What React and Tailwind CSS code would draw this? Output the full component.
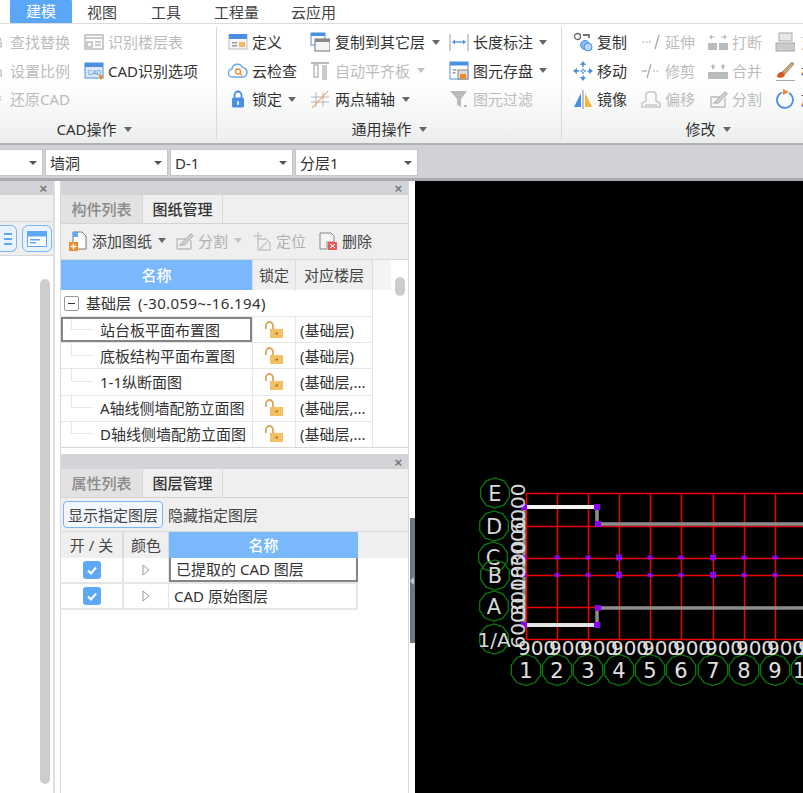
const FONT = "font-['Noto_Sans','Noto_Sans_CJK_SC','Liberation_Sans',sans-serif]";

const G = '#b9bbbd';
const B = '#4a90e2';
const O = '#ee8a2c';

const ICONS = {
  find: <g fill="none" stroke={G} strokeWidth="2"><circle cx="8" cy="6" r="3" /><path d="M4 11h8v7H4z" /></g>,
  scale: <g fill="none" stroke={G} strokeWidth="2"><path d="M8 2v7M4 9h8v9H4z" /></g>,
  restore: <g fill="none" stroke={G} strokeWidth="2"><path d="M8 3v15M4 7h8M4 12h8" /></g>,
  floors: <g fill="none" stroke={G} strokeWidth="1.5"><rect x="1" y="3" width="18" height="14" /><path d="M1 6h18M3 10h5v5H3zM11 10h6M11 13h6" /></g>,
  cadOpt: <g><rect x="1" y="2" width="18" height="15" fill="#dbe9fa" stroke={B} /><rect x="1" y="2" width="18" height="4" fill={B} /><text x="3.5" y="14" fontSize="6.5" fontFamily="Liberation Sans" fill={B}>CAD</text><path d="M15 13l5 3-4 3z" fill={O} /></g>,
  define: <g><rect x="1" y="3" width="18" height="14" fill="#f5f5f5" stroke="#bbb" /><rect x="1" y="2" width="18" height="5" fill={B} /><path d="M4 10h5v1.5H4zM4 13h5v1.5H4z" fill="#999" /><path d="M11 10h6v5h-6z" fill="#f4b860" /></g>,
  cloud: <g><path d="M5 16a4 4 0 0 1-1-8 5.5 5.5 0 0 1 10.5-1.5A4.8 4.8 0 0 1 15 16z" fill="#fff" stroke="#6aa8ea" strokeWidth="1.5" /><circle cx="10" cy="10.5" r="2.5" fill="none" stroke={O} strokeWidth="1.3" /><path d="M12 12.5l2 2" stroke={O} strokeWidth="1.3" /></g>,
  lock: <g><path d="M6.5 9V6a3.5 3.5 0 0 1 7 0v3" fill="none" stroke={B} strokeWidth="1.8" /><rect x="4" y="8.5" width="12" height="10" rx="1.5" fill={B} /><rect x="9.3" y="12" width="1.5" height="4" fill="#fff" /></g>,
  copyLayer: <g><rect x="1" y="1" width="14" height="12" fill="#fff" stroke={B} /><rect x="1" y="1" width="14" height="3" fill={B} /><rect x="5" y="7" width="15" height="12" fill="#f4f4f4" stroke="#777" /><rect x="5" y="7" width="15" height="3" fill="#888" /></g>,
  align: <g><path d="M1 2h18" stroke={G} strokeWidth="2" /><path d="M4 4h4v12H4z" fill="none" stroke={G} strokeWidth="1.5" /><path d="M12 4h5v15h-5z" fill="#c9cbcd" /></g>,
  axis: <g><path d="M6 3v15M13 3v15M1 8h18M1 13h18" stroke="#aaa" strokeWidth=".8" /><path d="M2 19L18 2" stroke={O} strokeWidth="1" /></g>,
  dim: <g stroke={B} fill={B}><path d="M1 2v17M19 2v17" stroke="#999" /><path d="M4 10h12" strokeWidth="1.3" /><path d="M3 10l3-2.5v5zM17 10l-3-2.5v5z" stroke="none" /></g>,
  save: <g><rect x="1" y="1" width="18" height="17" fill="#fff" stroke={B} /><rect x="1" y="1" width="18" height="3.5" fill={B} /><path d="M3.5 8h4v1.5h-4zM3.5 11h3v1.5h-3z" fill="#999" /><rect x="9" y="9" width="10" height="9" fill="#ddd" stroke="#888" /><rect x="11" y="13" width="6" height="5" fill={O} /></g>,
  filter: <g fill={G}><path d="M1 2h17l-6 8v8l-4-2v-6z" /><path d="M15 16h3v2h-3z" /></g>,
  copy: <g fill="none"><circle cx="4.5" cy="4.5" r="3" stroke="#666" strokeWidth="1.3" /><path d="M10 3h6v3" stroke="#444" strokeWidth="1.3" /><circle cx="12" cy="13" r="4.5" fill="#8dbcf0" stroke={B} /><circle cx="15" cy="15" r="4" fill="#b7d5f6" stroke={B} /></g>,
  move: <g fill={B}><path d="M10 0l3 4H7zM10 20l3-4H7zM0 10l4-3v6zM20 10l-4-3v6z" /><path d="M10 4v12M4 10h12" stroke={B} strokeWidth="1.4" strokeDasharray="2 1.5" /></g>,
  mirror: <g><path d="M8 4v14H1z" fill={B} /><path d="M12 4v14h7z" fill="#f5b43c" /><path d="M10 1v19" stroke="#888" /></g>,
  extend: <g stroke="#aaa" fill="none"><path d="M1 10h10" strokeDasharray="2 1.5" /><path d="M14 17l4-14" strokeWidth="1.3" /></g>,
  trim: <g stroke="#aaa" fill="none"><path d="M1 10h5" strokeWidth="1.3" /><path d="M12 10h7" strokeDasharray="2 1.5" /><path d="M6 17l4-14" strokeWidth="1.3" /></g>,
  offset: <g fill="none" stroke="#c6c8ca" strokeWidth="1.5"><path d="M1 18v-4l4-2V6a3 3 0 0 1 3-3h4a3 3 0 0 1 3 3v6l4 2v4z" /><path d="M4 16h12" /></g>,
  breakIt: <g fill={G}><path d="M0 11h9v7H0zM11 11h9v7h-9z" /><path d="M1 5l3-2.5v2h3v1H4v2zM19 5l-3-2.5v2h-3v1h3v2z" /></g>,
  merge: <g fill={G}><path d="M0 11h20v7H0z" /><path d="M5 3l2.5 3H6v2H4V6H2.5zM15 3l2.5 3H16v2h-2V6h-1.5z" /></g>,
  split: <g fill="none" stroke={G} strokeWidth="1.3"><path d="M3 18V8h12M3 18h14M17 18V9" /><path d="M6 14L17 3l2 2-9 9z" fill="#d4d6d8" /></g>,
  alignR: <g fill="#c9cbcd" stroke="#aaa"><rect x="4" y="1" width="13" height="8" fill="#e6e7e8" /><rect x="1" y="11" width="19" height="8" /></g>,
  brush: <g><path d="M7 11L17 1l2 2-9 10z" fill="#c9a77a" stroke="#7d6647" strokeWidth=".6" /><path d="M2 16c0-3 2-5 5-5l3 2c0 3-4 5-8 3z" fill="#d2561e" /><path d="M1 20h19" stroke="#555" /></g>,
  rotate: <g fill="none"><path d="M7 3.5A8 8 0 1 0 14 4" stroke={B} strokeWidth="1.8" /><path d="M8 0l6 3-6 3z" fill={O} /></g>,
  addDoc: <g><path d="M5 1h9l4 4v13H5z" fill="#fff" stroke="#777" /><path d="M5 1h5v5H5z" fill="#5fa8f5" /><rect x="1" y="11" width="9" height="9" fill={O} /><path d="M5.5 12.5v6M2.5 15.5h6" stroke="#fff" strokeWidth="1.5" /></g>,
  locate: <g fill="none" stroke="#c2c4c6" strokeWidth="1.3"><path d="M6 1v8M2 5h8" /><path d="M6 8h8l4 4v7H6z" /><path d="M8 18l7-7" /></g>,
  del: <g><path d="M2 2h11l3 3v6H9v7H2z" fill="#f4f4f4" stroke="#888" /><rect x="10" y="11" width="9" height="8" fill="#ee5a52" /><path d="M12 13l5 4M17 13l-5 4" stroke="#fff" /></g>,
};

function Icon({ name, className = 'w-5 h-5' }) {
  return <svg viewBox="0 0 20 20" className={`${className} shrink-0`}>{ICONS[name]}</svg>;
}

function Caret({ light }) {
  return (
    <svg viewBox="0 0 8 5" className="w-2 h-[5px] shrink-0 ml-[2px]">
      <path d="M0 0h8L4 5z" fill={light ? '#c4c4c4' : '#666'} />
    </svg>
  );
}

function RibbonItem({ icon, label, off, caret, iconSize, gap = 'gap-1' }) {
  return (
    <div className={`flex items-center h-[28.5px] whitespace-nowrap ${gap} ${off ? 'text-[#bcbcbc]' : 'text-[#333]'}`}>
      <Icon name={icon} className={iconSize} />
      <span>{label}</span>
      {caret && <Caret light={off} />}
    </div>
  );
}

function GroupLabel({ children, className = '' }) {
  return (
    <div className={`flex items-center justify-center gap-[5px] h-5 mt-[5px] text-[#333] ${className}`}>
      {children}
      <Caret />
    </div>
  );
}

function Ribbon() {
  return (
    <div className="flex h-[121px] shrink-0 bg-gradient-to-b from-white from-50% to-[#eceeee] border-b-2 border-[#b0b2b5]">
      <div className="w-[216px] shrink-0 pt-[4px]">
        <div className="flex h-[86px]">
          <div className="w-[90px] shrink-0 ml-[-6px]">
            <RibbonItem icon="find" label="查找替换" off iconSize="w-3 h-5" />
            <RibbonItem icon="scale" label="设置比例" off iconSize="w-3 h-5" />
            <RibbonItem icon="restore" label="还原CAD" off iconSize="w-3 h-5" />
          </div>
          <div>
            <RibbonItem icon="floors" label="识别楼层表" off />
            <RibbonItem icon="cadOpt" label="CAD识别选项" />
          </div>
        </div>
        <GroupLabel className="pr-[28px]">CAD操作</GroupLabel>
      </div>
      <div className="w-px my-[3px] bg-[#d8dada] shrink-0" />
      <div className="w-[344px] shrink-0 pt-[4px]">
        <div className="flex h-[86px] pl-[11px]">
          <div className="w-[82px] shrink-0">
            <RibbonItem icon="define" label="定义" />
            <RibbonItem icon="cloud" label="云检查" />
            <RibbonItem icon="lock" label="锁定" caret />
          </div>
          <div className="w-[139px] shrink-0">
            <RibbonItem icon="copyLayer" label="复制到其它层" caret gap="gap-[5px]" />
            <RibbonItem icon="align" label="自动平齐板" caret off gap="gap-[5px]" />
            <RibbonItem icon="axis" label="两点辅轴" caret gap="gap-[5px]" />
          </div>
          <div>
            <RibbonItem icon="dim" label="长度标注" caret />
            <RibbonItem icon="save" label="图元存盘" caret />
            <RibbonItem icon="filter" label="图元过滤" off />
          </div>
        </div>
        <GroupLabel>通用操作</GroupLabel>
      </div>
      <div className="w-px my-[3px] bg-[#d8dada] shrink-0" />
      <div className="w-[294px] shrink-0 pt-[4px]">
        <div className="flex h-[86px] pl-[11px]">
          <div className="w-[68px] shrink-0">
            <RibbonItem icon="copy" label="复制" />
            <RibbonItem icon="move" label="移动" />
            <RibbonItem icon="mirror" label="镜像" />
          </div>
          <div className="w-[67px] shrink-0">
            <RibbonItem icon="extend" label="延伸" off />
            <RibbonItem icon="trim" label="修剪" off />
            <RibbonItem icon="offset" label="偏移" off />
          </div>
          <div className="w-[67px] shrink-0">
            <RibbonItem icon="breakIt" label="打断" off />
            <RibbonItem icon="merge" label="合并" off />
            <RibbonItem icon="split" label="分割" off />
          </div>
          <div>
            <RibbonItem icon="alignR" label="对齐" off gap="gap-[6px]" />
            <RibbonItem icon="brush" label="格式刷" gap="gap-[6px]" />
            <RibbonItem icon="rotate" label="旋转" gap="gap-[6px]" />
          </div>
        </div>
        <GroupLabel className="mr-[2px]">修改</GroupLabel>
      </div>
    </div>
  );
}

function Select({ value, className }) {
  return (
    <div className={`flex items-center justify-between h-[27px] bg-white border border-[#c4c6c9] pl-[4px] pr-[5px] text-[#333] shrink-0 ${className}`}>
      <span>{value}</span>
      <svg viewBox="0 0 8 4" className="w-2 h-1">
        <path d="M0 0h8L4 4z" fill="#555" />
      </svg>
    </div>
  );
}

function PanelHeader() {
  return (
    <div className="flex justify-end items-center h-[14px] bg-[#d3d4d8] pr-[6px] shrink-0">
      <span className="text-[#777] text-[13px] leading-none font-bold font-['Liberation_Sans',sans-serif]">×</span>
    </div>
  );
}

function PanelTabs({ first, second }) {
  return (
    <div className="flex h-[29px] bg-[#efefef] border-b border-[#d4d4d4] shrink-0">
      <div className="w-[81px] flex items-center justify-center bg-[#e2e2e2] text-[#8a8a8a] font-medium">{first}</div>
      <div className="w-[81px] flex items-center justify-center bg-[#efefef] border-x border-[#d8d8d8] text-[#333] font-medium">{second}</div>
    </div>
  );
}

function ToolBtn({ icon, label, off, caret }) {
  return (
    <div className={`flex items-center gap-1 whitespace-nowrap ${off ? 'text-[#b0b0b0]' : 'text-[#444]'}`}>
      <Icon name={icon} className="w-[20px] h-[20px]" />
      <span>{label}</span>
      {caret && <Caret light={off} />}
    </div>
  );
}

function LockOpen() {
  return (
    <svg viewBox="0 0 20 18" className="w-5 h-[18px]">
      <path d="M2 8V4.5a3.5 3.5 0 0 1 7 0V8" fill="none" stroke="#d9a65c" strokeWidth="1.8" />
      <rect x="6" y="8" width="13" height="9" fill="#f3c161" />
      <rect x="11.5" y="11.5" width="2.5" height="2" fill="#a97a2c" />
    </svg>
  );
}

const DRAWINGS = [
  { name: '站台板平面布置图', floor: '(基础层)', active: true },
  { name: '底板结构平面布置图', floor: '(基础层)' },
  { name: '1-1纵断面图', floor: '(基础层,...' },
  { name: 'A轴线侧墙配筋立面图', floor: '(基础层,...' },
  { name: 'D轴线侧墙配筋立面图', floor: '(基础层,...' },
];

function DrawingPanel() {
  return (
    <div className="h-[267px] flex flex-col shrink-0 overflow-hidden border-b border-[#d8d8d8]">
      <PanelHeader />
      <PanelTabs first="构件列表" second="图纸管理" />
      <div className="flex items-center h-[36px] pl-[7px] pb-[2px] bg-[#efefef] border-b border-[#d8d8d8] shrink-0">
        <ToolBtn icon="addDoc" label="添加图纸" caret />
        <div className="w-[8px]" />
        <ToolBtn icon="split" label="分割" off caret />
        <div className="w-[10px]" />
        <ToolBtn icon="locate" label="定位" off />
        <div className="w-[12px]" />
        <ToolBtn icon="del" label="删除" />
      </div>
      <div className="flex flex-1 min-h-0">
        <div className="w-[312px] shrink-0">
          <div className="flex h-[30px] items-stretch">
            <div className="w-[191px] flex items-center justify-center bg-[#79b8fb] text-white font-medium">名称</div>
            <div className="w-[44px] flex items-center justify-center bg-[#efefef] border-x border-[#dcdcdc] text-[#444]">锁定</div>
            <div className="w-[77px] flex items-center justify-center bg-[#efefef] border-r border-[#dcdcdc] text-[#444]">对应楼层</div>
          </div>
          <div className="flex items-center h-[26px] border-r border-[#e6e6e6] pl-[3px] text-[#333] whitespace-nowrap">
            <span className="w-[15px] h-[15px] border border-[#999] rounded-[2px] flex items-center justify-center mr-[7px]">
              <span className="w-[7px] h-px bg-[#333]" />
            </span>
            基础层<span className="ml-[7px] tracking-[0.4px]">(-30.059~-16.194)</span>
          </div>
          {DRAWINGS.map((row) => (
            <div key={row.name} className="flex h-[26.2px] border-t border-[#e6e6e6] text-[#333] whitespace-nowrap">
              <div className={`w-[191px] shrink-0 flex items-center ${row.active ? 'border-2 border-[#858585]' : ''}`}>
                <div className={`h-full w-[32px] pl-[10px] shrink-0 ${row.active ? 'ml-[-2px]' : ''}`}>
                  <div className="h-1/2 border-l border-b border-[#e6e6e6]" />
                </div>
                <span className="ml-[7px]">{row.name}</span>
              </div>
              <div className="w-[44px] shrink-0 flex items-center justify-center border-x border-[#e6e6e6]">
                <LockOpen />
              </div>
              <div className="w-[77px] shrink-0 pl-[4px] flex items-center border-r border-[#e6e6e6]">{row.floor}</div>
            </div>
          ))}
        </div>
        <div className="flex-1 relative">
          <div className="h-[30px] w-[18px] bg-[#f4f4f4]" />
          <div className="absolute left-[22px] top-[17px] w-[10px] h-[19px] rounded-full bg-[#cdcdcd]" />
        </div>
      </div>
    </div>
  );
}

function CheckBox() {
  return (
    <span className="w-[18px] h-[18px] rounded-[3px] bg-[#5fa8f5] flex items-center justify-center">
      <svg viewBox="0 0 12 12" className="w-3 h-3">
        <path d="M2 6.5l3 3 5-6" fill="none" stroke="#fff" strokeWidth="2" />
      </svg>
    </span>
  );
}

function LayerRow({ name, active }) {
  return (
    <div className="flex h-[26px] border-b-2 border-[#e6e6e6] text-[#333] whitespace-nowrap w-[297px]">
      <div className="w-[63px] flex items-center justify-center border-r-2 border-[#e6e6e6] shrink-0"><CheckBox /></div>
      <div className="w-[45px] flex items-center justify-center border-r border-[#e6e6e6] shrink-0">
        <svg viewBox="0 0 8 12" className="w-2 h-3"><path d="M1 1l6 5-6 5z" fill="#fff" stroke="#999" /></svg>
      </div>
      <div className={`flex-1 flex items-center pl-[5px] ${active ? 'border-2 border-[#858585] border-t-0 pl-[4px]' : 'border-r-2 border-[#e6e6e6]'}`}>{name}</div>
    </div>
  );
}

function LayerPanel() {
  return (
    <div className="flex-1 flex flex-col min-h-0">
      <PanelHeader />
      <PanelTabs first="属性列表" second="图层管理" />
      <div className="flex items-center h-[34px] pl-[2px] bg-[#efefef] border-b border-[#d8d8d8] shrink-0 text-[#444]">
        <div className="w-[100px] h-[27px] flex items-center justify-center rounded-[4px] border border-[#7ab6f5] bg-[#f2f7fd]">显示指定图层</div>
        <span className="ml-[5px]">隐藏指定图层</span>
      </div>
      <div className="flex h-[26px] bg-[#efefef] text-[#444] shrink-0">
        <div className="w-[63px] flex items-center justify-center border-r-2 border-[#dcdcdc]">开 / 关</div>
        <div className="w-[45px] flex items-center justify-center border-r border-[#dcdcdc]">颜色</div>
        <div className="w-[189px] flex items-center justify-center bg-[#79b8fb] text-white font-medium">名称</div>
      </div>
      <LayerRow name="已提取的 CAD 图层" active />
      <LayerRow name="CAD 原始图层" />
    </div>
  );
}

function LeftPanel() {
  return (
    <div className="w-[55px] shrink-0 flex flex-col border-r-2 border-[#dedede]">
      <PanelHeader />
      <div className="h-[27px] bg-[#efefef] border-b border-[#d8d8d8] shrink-0" />
      <div className="h-[33px] bg-[#efefef] flex items-center shrink-0 overflow-hidden">
        <div className="w-[18px] h-[27px] ml-[-1px] shrink-0 rounded-r-[6px] border border-l-0 border-[#7ab6f5] bg-[#e8f3ff] flex flex-col justify-center items-center gap-[3px]">
          <span className="w-[8px] h-[2px] bg-[#5fa8f5]" />
          <span className="w-[8px] h-[2px] bg-[#5fa8f5]" />
          <span className="w-[8px] h-[2px] bg-[#5fa8f5]" />
        </div>
        <div className="w-[30px] h-[27px] ml-[5px] shrink-0 rounded-[6px] border border-[#7ab6f5] bg-[#e8f3ff] flex items-center justify-center">
          <svg viewBox="0 0 20 16" className="w-5 h-4">
            <rect x="0.5" y="0.5" width="19" height="15" fill="#fff" stroke="#5fa8f5" />
            <rect x="0.5" y="0.5" width="19" height="5" fill="#5fa8f5" />
            <path d="M3 8h10v1.5H3zM3 11h6v1.5H3z" fill="#5fa8f5" />
          </svg>
        </div>
      </div>
      <div className="flex-1 min-h-0 pt-[23px] pl-[40px] border-t border-[#d8d8d8]">
        <div className="w-[10px] h-[505px] rounded-full bg-[#cdcdcd]" />
      </div>
    </div>
  );
}

const COL_X = [526, 557, 588, 619, 650, 681, 713, 744, 775, 806];
const ROW_Y = [493, 526, 558, 575, 607, 639];
const AXIS_LEFT = [['E', 495, 493], ['D', 494, 526], ['C', 493, 557], ['B', 495, 575], ['A', 494, 606], ['1/A', 494, 639]];
const DIMS_LEFT = [['6000', 509], ['3000', 542], ['1800', 566], ['3000', 591], ['6000', 623]];

function poly(cx, cy, r) {
  const pts = [];
  for (let i = 0; i < 10; i++) {
    const a = (Math.PI / 5) * i + Math.PI / 10;
    pts.push(`${(cx + r * Math.cos(a)).toFixed(1)},${(cy + r * Math.sin(a)).toFixed(1)}`);
  }
  return pts.join(' ');
}

function Dot({ x, y, big }) {
  const s = big ? 6 : 5;
  return <rect x={x - s / 2} y={y - (big ? 3 : 2)} width={s} height={big ? 6 : 4} fill="#8a00f0" />;
}

// the plan is a free drawing, page x/y minus the canvas origin (415,181)
function Canvas() {
  return (
    <div className="flex-1 bg-black min-w-0">
      <svg width="388" height="612" viewBox="415 181 388 612" fontFamily="DejaVu Sans" className="block">
        {ROW_Y.map((y) => (
          <line key={y} x1="526" x2="803" y1={y + 0.5} y2={y + 0.5} stroke="#f00000" strokeWidth="1.5" />
        ))}
        {COL_X.map((x) => (
          <line key={x} x1={x + 0.5} x2={x + 0.5} y1="493" y2="639" stroke="#f00000" strokeWidth="1.5" />
        ))}
        <path d="M524 507V625M597 507V524H803M597 625V608H803" fill="none" stroke="#8c8c8c" strokeWidth="3.5" />
        <path d="M524 507H596" fill="none" stroke="#f4f4f4" strokeWidth="4" />
        <path d="M524 625H596" fill="none" stroke="#e4e4e4" strokeWidth="4" />
        {[[524, 507], [597, 507], [598, 524], [524, 625], [597, 625], [598, 608]].map(([x, y]) => (
          <Dot key={`${x}-${y}`} x={x} y={y} big />
        ))}
        {[524, 557, 588, 619, 650, 681, 713, 744, 775].flatMap((x) => [557.5, 575].map((y) => (
          <Dot key={`${x}-${y}`} x={x} y={y} big={x === 619 || x === 713} />
        )))}
        {AXIS_LEFT.map(([t, x, y]) => (
          <g key={t}>
            <polygon points={poly(x, y, 15)} fill="none" stroke="#0b7a0b" strokeWidth="1.3" />
            <text x={x} y={y + 8} textAnchor="middle" fontSize={t === '1/A' ? 20 : 21} fill="#d8d8d8">{t}</text>
          </g>
        ))}
        {DIMS_LEFT.map(([t, y]) => (
          <text key={y} transform={`translate(525 ${y}) rotate(-90)`} textAnchor="middle" fontSize="20" fill="#d8d8d8">{t}</text>
        ))}
        {COL_X.map((x, i) => (
          <g key={x}>
            <polygon points={poly(x, 670, 15.5)} fill="none" stroke="#0b7a0b" strokeWidth="1.3" />
            <text x={x} y="678" textAnchor="middle" fontSize="21" fill="#e0e0e0">{i + 1}</text>
            <text x={x + 11} y="655" textAnchor="middle" fontSize="20" fill="#e0e0e0">900</text>
          </g>
        ))}
      </svg>
    </div>
  );
}

export default function App() {
  return (
    <div className={`w-[803px] h-[793px] overflow-hidden flex flex-col bg-white text-[15px] leading-[22px] ${FONT}`}>
      <div className="flex items-end h-[24px] shrink-0 pl-[10px] border-b border-[#dcdcdc] text-[#444]">
        <div className="w-[62px] h-[24px] flex items-center justify-center rounded-t-[3px] bg-[#5ba7f7] text-white">建模</div>
        <div className="w-[31px] ml-[15px] h-full flex items-center">视图</div>
        <div className="w-[31px] ml-[33px] h-full flex items-center">工具</div>
        <div className="ml-[32px] h-full flex items-center">工程量</div>
        <div className="ml-[32px] h-full flex items-center">云应用</div>
      </div>
      <Ribbon />
      <div className="flex h-[36px] shrink-0 gap-[2px] pt-[4px] bg-[#d1d2d6] border-b-[3px] border-[#a8aaad]">
        <Select value="" className="w-[45px] ml-[-2px]" />
        <Select value="墙洞" className="w-[123px]" />
        <Select value="D-1" className="w-[123px]" />
        <Select value="分层1" className="w-[123px]" />
      </div>
      <div className="flex flex-1 min-h-0">
        <LeftPanel />
        <div className="w-[5px] shrink-0" />
        <div className="w-[349px] shrink-0 flex flex-col border-x border-[#d8d8d8]">
          <DrawingPanel />
          <div className="h-[6px] shrink-0 bg-white" />
          <div className="flex-1 min-h-0 flex flex-col border-t border-[#d8d8d8]">
            <LayerPanel />
          </div>
        </div>
        <div className="w-[6px] shrink-0 bg-white flex flex-col pl-[1px]">
          <div className="h-[337px] shrink-0" />
          <div className="h-[125px] bg-[#6b7881] flex items-center">
            <svg viewBox="0 0 4 8" className="w-1 h-2"><path d="M4 0v8L0 4z" fill="#c8c8c8" /></svg>
          </div>
        </div>
        <Canvas />
      </div>
    </div>
  );
}
